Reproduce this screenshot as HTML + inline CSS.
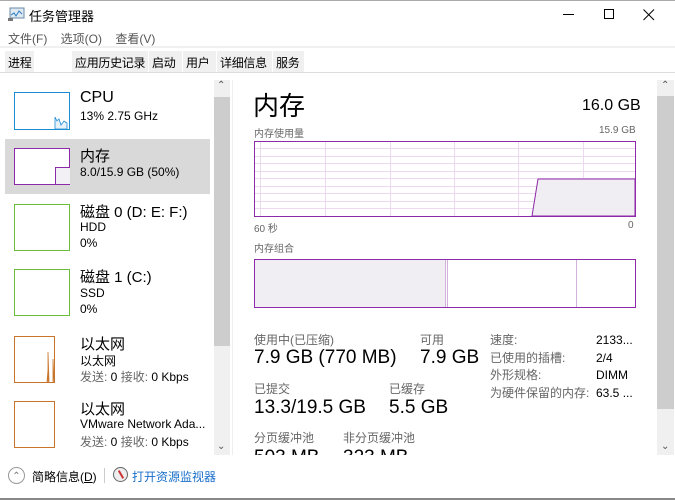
<!DOCTYPE html><html><head><meta charset="utf-8"><style>
*{margin:0;padding:0;box-sizing:border-box}
body{width:675px;height:500px;overflow:hidden;background:#fff;font-family:"Liberation Sans","Noto Sans CJK SC",sans-serif;color:#000;position:relative}
.a{position:absolute;white-space:nowrap}
.g{color:#666}
.box{position:absolute;border:1px solid;background:#fff}
.tab{position:absolute;top:51px;height:21px;background:#f0f0f0;font-size:12px;padding:3px 3px 0;border-right:1px solid #fff;white-space:nowrap;letter-spacing:-0.3px}
.t{font-size:15px}.s{font-size:12px}
</style></head><body>
<div class="a" style="left:0;top:0;width:675px;height:1px;background:#aaa"></div>
<svg class="a" style="left:8px;top:7px" width="18" height="15"><rect x="2" y="1" width="14" height="10" fill="#dfe9f2" stroke="#6a8aa6"/><path d="M3 8l3-2 2 3 3-5 3 3" stroke="#2a7ac0" fill="none"/><rect x="0" y="11" width="5" height="3" fill="#777"/></svg>
<div class="a" style="left:29px;top:6px;font-size:13px">任务管理器</div>
<div class="a" style="left:563px;top:14px;width:11px;height:1px;background:#000"></div>
<div class="a" style="left:604px;top:9px;width:10px;height:10px;border:1px solid #000"></div>
<svg class="a" style="left:643px;top:9px" width="12" height="12"><path d="M.5 .5L11 11M11 .5L.5 11" stroke="#000" stroke-width="1"/></svg>
<div class="a g" style="left:8px;top:30px;font-size:12px;color:#555">文件(F)&nbsp;&nbsp;&nbsp;&nbsp;选项(O)&nbsp;&nbsp;&nbsp;&nbsp;查看(V)</div>
<div class="a" style="left:0;top:46px;width:675px;height:2px;background:#f0f0f0"></div>
<div class="tab" style="left:5px;width:30px">进程</div>
<div class="tab" style="left:72px;width:77px">应用历史记录</div>
<div class="tab" style="left:149px;width:34px">启动</div>
<div class="tab" style="left:183px;width:34px">用户</div>
<div class="tab" style="left:217px;width:56px">详细信息</div>
<div class="tab" style="left:273px;width:32px">服务</div>
<div class="a" style="left:0;top:72px;width:675px;height:1px;background:#ddd"></div>
<!-- left scroll -->
<div class="a" style="left:214px;top:80px;width:16px;height:375px;background:#f0f0f0"></div>
<div class="a" style="left:214px;top:97px;width:16px;height:249px;background:#cdcdcd"></div>
<div class="a" style="left:217px;top:80px;font-size:10px;color:#555">⌃</div>
<div class="a" style="left:217px;top:441px;font-size:10px;color:#555">⌄</div>
<div class="a" style="left:232px;top:80px;width:1px;height:375px;background:#eee"></div>
<!-- left items -->
<div class="box" style="left:14px;top:92px;width:56px;height:38px;border-color:#1c8bd4"><svg width="54" height="36" style="position:absolute;left:0;top:0"><path d="M40 36V24l2 4 2-2 2 6 3-4 3 2V36z" fill="#e6f1fa" stroke="#1c8bd4" stroke-width=".8"/></svg></div>
<div class="a" style="left:80px;top:89px;font-size:16px">CPU</div>
<div class="a s" style="left:80px;top:109px">13% 2.75 GHz</div>
<div class="a" style="left:5px;top:139px;width:205px;height:55px;background:#d9d9d9"></div>
<div class="box" style="left:14px;top:148px;width:56px;height:37px;border-color:#8e2aa9"><div class="a" style="left:40px;top:18px;width:15px;height:17px;border-left:1px solid #8e2aa9;border-top:1px solid #8e2aa9;background:#f2f0f4"></div></div>
<div class="a" style="left:80px;top:145px;font-size:15px">内存</div>
<div class="a s" style="left:80px;top:165px">8.0/15.9 GB (50%)</div>
<div class="box" style="left:14px;top:204px;width:56px;height:47px;border-color:#6abf3a"></div>
<div class="a" style="left:80px;top:201px;font-size:15px">磁盘 0 (D: E: F:)</div>
<div class="a s" style="left:80px;top:220px">HDD</div><div class="a s" style="left:80px;top:236px">0%</div>
<div class="box" style="left:14px;top:269px;width:56px;height:47px;border-color:#6abf3a"></div>
<div class="a" style="left:80px;top:266px;font-size:15px">磁盘 1 (C:)</div>
<div class="a s" style="left:80px;top:286px">SSD</div><div class="a s" style="left:80px;top:302px">0%</div>
<div class="box" style="left:14px;top:336px;width:41px;height:47px;border-color:#c8742a"><svg width="40" height="45" style="position:absolute;left:0;top:0"><path d="M33 45V15l1 30M38 45V22l1 23M32 45l1-12 1 12" stroke="#c8742a" stroke-width=".8" fill="none"/></svg></div>
<div class="a" style="left:80px;top:333px;font-size:15px">以太网</div>
<div class="a s" style="left:80px;top:352px">以太网</div>
<div class="a s" style="left:80px;top:368px"><span class="g">发送:</span> 0 <span class="g">接收:</span> 0 Kbps</div>
<div class="box" style="left:14px;top:401px;width:41px;height:47px;border-color:#c8742a"></div>
<div class="a" style="left:80px;top:398px;font-size:15px">以太网</div>
<div class="a s" style="left:80px;top:417px">VMware Network Ada...</div>
<div class="a s" style="left:80px;top:433px"><span class="g">发送:</span> 0 <span class="g">接收:</span> 0 Kbps</div>
<!-- right -->
<div class="a" style="left:253px;top:86px;font-size:26px">内存</div>
<div class="a" style="left:582px;top:97px;font-size:16px">16.0 GB</div>
<div class="a g" style="left:254px;top:125px;font-size:10px">内存使用量</div>
<div class="a g" style="left:599px;top:125px;font-size:10px">15.9 GB</div>
<svg class="a" style="left:254px;top:141px" width="382" height="76">
<g stroke="#ecd9f0" stroke-width="1">
<path d="M0 7.5H382M0 15.5H382M0 22.5H382M0 30.5H382M0 37.5H382M0 45.5H382M0 52.5H382M0 60.5H382M0 67.5H382"/>
<path d="M6.5 0V76M71.5 0V76M136.5 0V76M200.5 0V76M264.5 0V76M329.5 0V76"/></g>
<path d="M278 75L284 38H381V75z" fill="#f1eef3" stroke="#8e2aa9"/>
<rect x=".5" y=".5" width="381" height="75" fill="none" stroke="#8e2aa9"/></svg>
<div class="a g" style="left:254px;top:220px;font-size:10px">60 秒</div>
<div class="a g" style="left:628px;top:220px;font-size:10px">0</div>
<div class="a g" style="left:254px;top:240px;font-size:10px">内存组合</div>
<svg class="a" style="left:254px;top:259px" width="382" height="49">
<rect x="0" y="0" width="191" height="49" fill="#f1eef3"/>
<path d="M191.5 0V49M193.5 0V49M322.5 0V49" stroke="#d4b0dc"/>
<rect x=".5" y=".5" width="381" height="48" fill="none" stroke="#8e2aa9"/></svg>
<div class="a g s" style="left:254px;top:331px">使用中(已压缩)</div>
<div class="a" style="left:254px;top:347px;font-size:19px">7.9 GB (770 MB)</div>
<div class="a g s" style="left:420px;top:331px">可用</div>
<div class="a" style="left:420px;top:347px;font-size:19px">7.9 GB</div>
<div class="a g s" style="left:254px;top:380px">已提交</div>
<div class="a" style="left:254px;top:397px;font-size:19px">13.3/19.5 GB</div>
<div class="a g s" style="left:389px;top:380px">已缓存</div>
<div class="a" style="left:389px;top:397px;font-size:19px">5.5 GB</div>
<div class="a g s" style="left:254px;top:429px">分页缓冲池</div>
<div class="a g s" style="left:343px;top:429px">非分页缓冲池</div>
<div class="a" style="left:254px;top:447px;font-size:19px;height:8px;overflow:hidden;line-height:22px">503 MB</div>
<div class="a" style="left:343px;top:447px;font-size:19px;height:8px;overflow:hidden;line-height:22px">323 MB</div>
<div class="a g s" style="left:490px;top:332px;line-height:17.5px">速度:<br>已使用的插槽:<br>外形规格:<br>为硬件保留的内存:</div>
<div class="a s" style="left:596px;top:332px;line-height:17.5px">2133...<br>2/4<br>DIMM<br>63.5 ...</div>
<div class="a" style="left:657px;top:80px;width:17px;height:375px;background:#f0f0f0"></div>
<div class="a" style="left:657px;top:96px;width:17px;height:313px;background:#cdcdcd"></div>
<div class="a" style="left:661px;top:80px;font-size:10px;color:#555">⌃</div>
<div class="a" style="left:661px;top:441px;font-size:10px;color:#555">⌄</div>
<!-- footer -->
<div class="a" style="left:8px;top:467px;width:17px;height:17px;border:1px solid #999;border-radius:50%;font-size:10px;color:#777;text-align:center;line-height:17px">⌃</div>
<div class="a" style="left:32px;top:468px;font-size:12px">简略信息(<u>D</u>)</div>
<div class="a" style="left:104px;top:468px;width:1px;height:15px;background:#ccc"></div>
<div class="a" style="left:113px;top:467px;width:15px;height:15px;border:1px solid #666;border-radius:50%;background:#eee"><div class="a" style="left:6px;top:2px;width:2px;height:9px;background:#c33;transform:rotate(-30deg)"></div></div>
<div class="a" style="left:132px;top:468px;font-size:12px;color:#1a6fc9">打开资源监视器</div>
<div class="a" style="left:0;top:498px;width:675px;height:2px;background:#888"></div>
</body></html>
